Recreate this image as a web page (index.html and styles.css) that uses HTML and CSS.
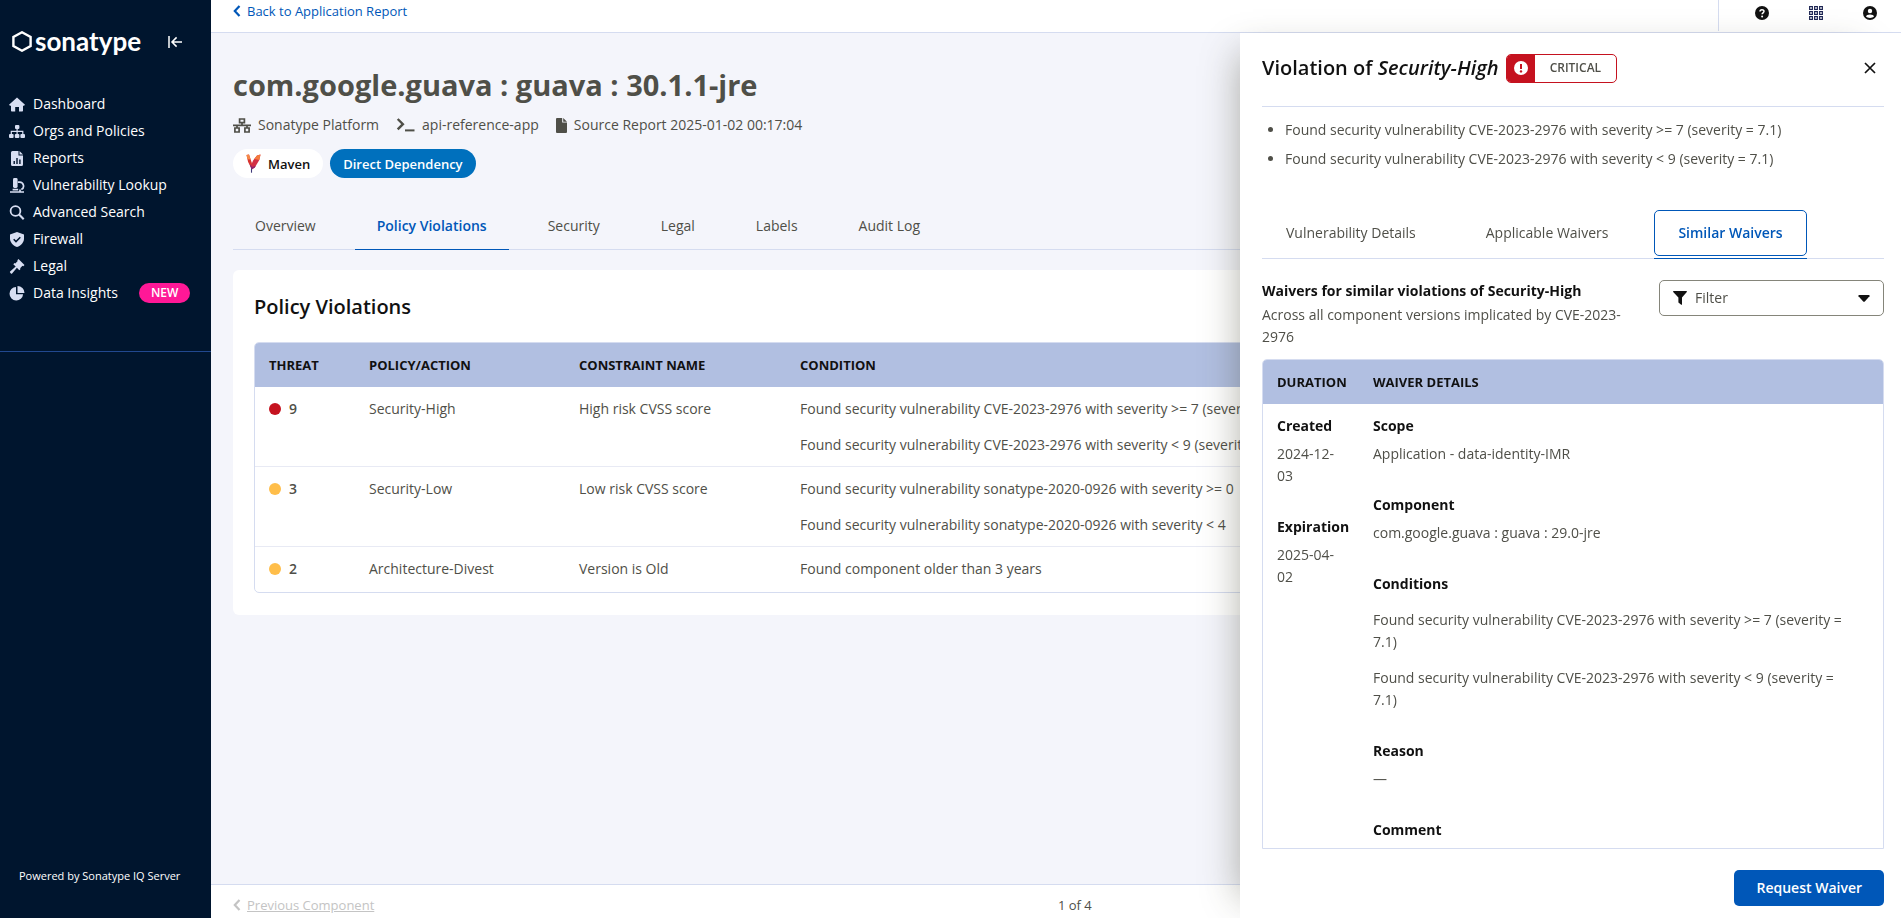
FILE: index.html
```html
<!DOCTYPE html>
<html lang="en">
<head>
<meta charset="utf-8">
<title>Component Details</title>
<link rel="stylesheet" href="styles.css">
</head>
<body>
<svg class="sprite" aria-hidden="true">
  <symbol id="i-chevron" viewBox="0 0 8 12"><path d="M6.5 1 1.8 6l4.7 5" fill="none" stroke="currentColor" stroke-width="2.2"/></symbol>
  <symbol id="i-home" viewBox="0 0 16 14"><path d="M8 0 16 7.2 15 8.2H14V13.2Q14 14 13.2 14H10V9.6H6.2V14H2.8Q2 14 2 13.2V8.2H1L0 7.2Z" fill="currentColor"/></symbol>
  <symbol id="i-orgs" viewBox="0 0 16 13"><g fill="currentColor"><rect x="6" y="0" width="4.4" height="4" rx="1"/><rect x="0" y="9" width="4.6" height="4" rx="1"/><rect x="5.8" y="9" width="4.6" height="4" rx="1"/><rect x="11.4" y="9" width="4.6" height="4" rx="1"/></g><path d="M8.1 4v5M2.3 9V6.3h11.5V9" fill="none" stroke="currentColor" stroke-width="1.2"/></symbol>
  <symbol id="i-report" viewBox="0 0 12 15"><path d="M1.5 0H7.5V4.5H12V13.5Q12 15 10.5 15H1.5Q0 15 0 13.5V1.5Q0 0 1.5 0ZM8.5 0 12 3.6H8.5Z" fill="currentColor"/><path d="M3.2 13v-3M6 13V7M8.9 13V8.4" stroke="#00152e" stroke-width="1.4"/></symbol>
  <symbol id="i-micro" viewBox="0 0 16 15"><rect x="4" y="0" width="4.6" height="10" rx="1.4" fill="currentColor"/><path d="M8.8 4.2h1.5a3.9 3.9 0 0 1 2 7.4M1 14h14M3.6 11.6h5.6M11 13.4v-1.8" fill="none" stroke="currentColor" stroke-width="1.7"/></symbol>
  <symbol id="i-search" viewBox="0 0 15 15"><circle cx="6" cy="6" r="4.9" fill="none" stroke="currentColor" stroke-width="1.8"/><path d="m9.6 9.6 4.6 4.6" stroke="currentColor" stroke-width="2.1"/></symbol>
  <symbol id="i-shield" viewBox="0 0 14 15"><path d="M7 0 14 2.4V6.5C14 10.5 11 13.6 7 15 3 13.6 0 10.5 0 6.5V2.4Z" fill="currentColor"/><path d="m3.7 7.2 2.3 2.4 4.3-4.3" fill="none" stroke="#00152e" stroke-width="1.5"/></symbol>
  <symbol id="i-gavel" viewBox="0 0 15 15"><path d="M7.8 1.2 9 0 15 6 13.8 7.2 13 6.8 10.6 9.2 11 10 9.8 11.2 7.4 8.8 2.6 14.4Q2 15 1.4 14.4L.6 13.6Q0 13 .6 12.4L6.2 7.6 3.8 5.2 5 4 5.8 4.4 8.2 2Z" fill="currentColor"/></symbol>
  <symbol id="i-pie" viewBox="0 0 15 15"><path d="M6.5 1V8.3H13.6A6.8 6.8 0 1 1 6.5 1ZM8 0A7 7 0 0 1 15 7H8Z" fill="currentColor"/></symbol>
  <symbol id="i-sitemap" viewBox="0 0 18 15"><path d="M6.6 1h4.8v3.6H6.6ZM1.9 10h4.2v4H1.9ZM11.9 10h4.2v4h-4.2ZM9 4.6v2.7M4 10V7.3M14 10V7.3M0 7.3h18" fill="none" stroke="currentColor" stroke-width="1.7"/></symbol>
  <symbol id="i-terminal" viewBox="0 0 18 14"><path d="m1.2 1 5.2 5.2L1.2 11.4" fill="none" stroke="currentColor" stroke-width="2.4"/><path d="M8.5 12.4H18" stroke="currentColor" stroke-width="2"/></symbol>
  <symbol id="i-file" viewBox="0 0 11 15"><path d="M1 0H6.2V4.6H11V14Q11 15 10 15H1Q0 15 0 14V1Q0 0 1 0ZM7.2 0 11 3.7H7.2Z" fill="currentColor"/></symbol>
  <symbol id="i-maven" viewBox="0 0 14 19"><path d="M0 1 2.5.5 5.2 8.5 6 13 4 12.5 1.6 8Z" fill="#d8342f"/><path d="M0 1 2.5.5 4 5.5 1 5.2Z" fill="#f58a45"/><path d="M14 .5 12.8 6 8.3 13.5 5.4 15.5 4 12.5 6.6 6.5 10.5 1.6Z" fill="#d22f45"/><path d="M14 .5 12.8 6 7.7 5 10.5 1.6Z" fill="#f47b3c"/><path d="m3 10 3 3 3.3-1.2-1 1.7-3.3 2Z" fill="#8b2370"/><path d="M5 14.5v4.2" stroke="#3f3a7a" stroke-width="1.1"/></symbol>
  <symbol id="i-help" viewBox="0 0 14 14"><circle cx="7" cy="7" r="7" fill="currentColor"/><path d="M5 5.6C5 3.1 9 3.2 9 5.3 9 6.8 7.1 6.8 7.1 8.3" fill="none" stroke="#fff" stroke-width="1.5"/><circle cx="7.1" cy="10.4" r="1" fill="#fff"/></symbol>
  <symbol id="i-grid" viewBox="0 0 14 14"><path d="M.6.6h2.8v2.8H.6ZM5.6.6h2.8v2.8H5.6ZM10.6.6h2.8v2.8h-2.8ZM.6 5.6h2.8v2.8H.6ZM5.6 5.6h2.8v2.8H5.6ZM10.6 5.6h2.8v2.8h-2.8ZM.6 10.6h2.8v2.8H.6ZM5.6 10.6h2.8v2.8H5.6ZM10.6 10.6h2.8v2.8h-2.8Z" fill="none" stroke="currentColor" stroke-width="1.1"/></symbol>
  <symbol id="i-user" viewBox="0 0 14 14"><circle cx="7" cy="7" r="7" fill="currentColor"/><circle cx="7" cy="5" r="2.2" fill="#fff"/><path d="M3 10.6C3 7.8 11 7.8 11 10.6 9.6 12.4 4.4 12.4 3 10.6Z" fill="#fff"/></symbol>
  <symbol id="i-close" viewBox="0 0 12 12"><path d="m1 1 10 10M11 1 1 11" stroke="currentColor" stroke-width="1.7"/></symbol>
  <symbol id="i-alert" viewBox="0 0 14 14"><circle cx="7" cy="7" r="7" fill="#fff"/><path d="M7 3v5" stroke="#c5121f" stroke-width="2"/><circle cx="7" cy="10.4" r="1.2" fill="#c5121f"/></symbol>
  <symbol id="i-filter" viewBox="0 0 14 14"><path d="M.4 0H13.6Q14.2.6 13.6 1.2L9 6.6V13.4Q8.8 14 8.2 13.7L5.4 11.6V6.6L.4 1.2Q-.2.6.4 0Z" fill="currentColor"/></symbol>
  <symbol id="i-caret" viewBox="0 0 12 7"><path d="M1 0H11Q12 .4 11.5 1.2L6.8 6.4Q6 7 5.2 6.4L.5 1.2Q0 .4 1 0Z" fill="currentColor"/></symbol>
  <symbol id="i-collapse" viewBox="0 0 14 12"><path d="M1 0v12M14 6H4M8.6 1.4 4 6l4.6 4.6" fill="none" stroke="currentColor" stroke-width="1.5"/></symbol>
  <symbol id="i-hex" viewBox="0 0 20 21"><path d="M10 1.3 18.6 6v9L10 19.7 1.4 15V6Z" fill="none" stroke="currentColor" stroke-width="2.4"/></symbol>
</svg>

<div class="app">
  <aside class="sidebar">
    <div class="brand">
      <a class="logo" href="#"><svg class="logo-mark"><use href="#i-hex"/></svg><span>sonatype</span></a>
      <button class="icon-btn collapse" aria-label="Collapse sidebar"><svg><use href="#i-collapse"/></svg></button>
    </div>
    <nav class="nav">
      <a href="#"><svg><use href="#i-home"/></svg>Dashboard</a>
      <a href="#"><svg><use href="#i-orgs"/></svg>Orgs and Policies</a>
      <a href="#"><svg><use href="#i-report"/></svg>Reports</a>
      <a href="#"><svg><use href="#i-micro"/></svg>Vulnerability Lookup</a>
      <a href="#"><svg><use href="#i-search"/></svg>Advanced Search</a>
      <a href="#"><svg><use href="#i-shield"/></svg>Firewall</a>
      <a href="#"><svg><use href="#i-gavel"/></svg>Legal</a>
      <a href="#"><svg><use href="#i-pie"/></svg>Data Insights<span class="new">NEW</span></a>
    </nav>
    <p class="powered">Powered by Sonatype IQ Server</p>
  </aside>

  <div class="page">
    <header class="topbar">
      <a class="back" href="#"><svg class="chev"><use href="#i-chevron"/></svg>Back to Application Report</a>
      <div class="tools">
        <button class="icon-btn" aria-label="Help"><svg><use href="#i-help"/></svg></button>
        <button class="icon-btn apps" aria-label="Apps"><svg><use href="#i-grid"/></svg></button>
        <button class="icon-btn" aria-label="Account"><svg><use href="#i-user"/></svg></button>
      </div>
    </header>

    <main class="content">
      <h1>com.google.guava : guava : 30.1.1-jre</h1>
      <div class="meta">
        <span><svg class="m-site"><use href="#i-sitemap"/></svg>Sonatype Platform</span>
        <span><svg class="m-term"><use href="#i-terminal"/></svg>api-reference-app</span>
        <span><svg class="m-file"><use href="#i-file"/></svg>Source Report 2025-01-02 00:17:04</span>
      </div>
      <div class="tags">
        <span class="tag"><svg><use href="#i-maven"/></svg>Maven</span>
        <span class="tag direct">Direct Dependency</span>
      </div>
      <div class="tabs" role="tablist">
        <button role="tab">Overview</button>
        <button role="tab" class="on" aria-selected="true">Policy Violations</button>
        <button role="tab">Security</button>
        <button role="tab">Legal</button>
        <button role="tab">Labels</button>
        <button role="tab">Audit Log</button>
      </div>
      <section class="tile">
        <h2>Policy Violations</h2>
        <div class="frame">
          <table class="violations">
            <colgroup><col class="c1"><col class="c2"><col class="c3"><col></colgroup>
            <thead><tr><th>THREAT</th><th>POLICY/ACTION</th><th>CONSTRAINT NAME</th><th>CONDITION</th></tr></thead>
            <tbody>
              <tr><td><span class="threat"><i class="dot red"></i>9</span></td><td>Security-High</td><td>High risk CVSS score</td><td><p>Found security vulnerability CVE-2023-2976 with severity &gt;= 7 (severity = 7.1)</p><p>Found security vulnerability CVE-2023-2976 with severity &lt; 9 (severity = 7.1)</p></td></tr>
              <tr><td><span class="threat"><i class="dot"></i>3</span></td><td>Security-Low</td><td>Low risk CVSS score</td><td><p>Found security vulnerability sonatype-2020-0926 with severity &gt;= 0</p><p>Found security vulnerability sonatype-2020-0926 with severity &lt; 4</p></td></tr>
              <tr><td><span class="threat"><i class="dot"></i>2</span></td><td>Architecture-Divest</td><td>Version is Old</td><td><p>Found component older than 3 years</p></td></tr>
            </tbody>
          </table>
        </div>
      </section>
    </main>

    <footer class="pager">
      <a class="prev" aria-disabled="true"><svg class="chev"><use href="#i-chevron"/></svg><span>Previous Component</span></a>
      <span>1 of 4</span>
      <a class="next" href="#">Next Component</a>
    </footer>
  </div>

  <aside class="drawer">
    <header class="drawer-head">
      <h2>Violation of <em>Security-High</em></h2>
      <span class="critical"><span class="crit-icon"><svg><use href="#i-alert"/></svg></span><span class="crit-text">CRITICAL</span></span>
      <button class="icon-btn close" aria-label="Close"><svg><use href="#i-close"/></svg></button>
    </header>
    <ul class="reasons">
      <li>Found security vulnerability CVE-2023-2976 with severity &gt;= 7 (severity = 7.1)</li>
      <li>Found security vulnerability CVE-2023-2976 with severity &lt; 9 (severity = 7.1)</li>
    </ul>
    <div class="dtabs" role="tablist">
      <button role="tab"><span>Vulnerability Details</span></button>
      <button role="tab"><span>Applicable Waivers</span></button>
      <button role="tab" class="on" aria-selected="true"><span>Similar Waivers</span></button>
    </div>
    <div class="intro">
      <div>
        <h3>Waivers for similar violations of Security-High</h3>
        <p>Across all component versions implicated by CVE-2023-2976</p>
      </div>
      <button class="filter"><svg class="f-icon"><use href="#i-filter"/></svg>Filter<svg class="f-caret"><use href="#i-caret"/></svg></button>
    </div>
    <div class="waivers">
      <table>
        <colgroup><col class="w1"><col></colgroup>
        <thead><tr><th>DURATION</th><th>WAIVER DETAILS</th></tr></thead>
        <tbody><tr>
          <td><dl><dt>Created</dt><dd>2024-12-03</dd><dt>Expiration</dt><dd>2025-04-02</dd></dl></td>
          <td class="details"><dl>
            <dt>Scope</dt><dd>Application - data-identity-IMR</dd>
            <dt>Component</dt><dd>com.google.guava : guava : 29.0-jre</dd>
            <dt>Conditions</dt><dd class="conds"><p>Found security vulnerability CVE-2023-2976 with severity &gt;= 7 (severity = 7.1)</p><p>Found security vulnerability CVE-2023-2976 with severity &lt; 9 (severity = 7.1)</p></dd>
            <dt>Reason</dt><dd>—</dd>
            <dt>Comment</dt>
          </dl></td>
        </tr></tbody>
      </table>
    </div>
    <footer class="drawer-foot"><button class="primary">Request Waiver</button></footer>
  </aside>
</div>
</body>
</html>
```
FILE: styles.css
```css
* { box-sizing: border-box; }
body { margin: 0; font: 14px/22px "Open Sans", sans-serif; color: #4f4f48; background: #f4f5fb; }
h1, h2, h3, p, ul, dl, dd { margin: 0; padding: 0; }
button { font: inherit; color: inherit; background: none; border: 0; padding: 0; cursor: pointer; }
a { text-decoration: none; color: inherit; }
.sprite { display: none; }
svg { flex: none; }
.app { display: grid; grid-template-columns: 211px 1fr; height: 100vh; overflow: hidden; }
.icon-btn { display: flex; }

.sidebar { background: #00152e; color: #fff; display: flex; flex-direction: column; }
.brand { display: flex; justify-content: space-between; align-items: center; height: 84px; padding: 0 29px 0 12px; }
.logo { display: flex; align-items: center; gap: 3px; padding-bottom: 2px; font: 700 26px/32px Lato, sans-serif; }
.logo-mark { width: 20px; height: 21px; }
.collapse svg { width: 14px; height: 12px; }
.nav { display: flex; flex-direction: column; gap: 5px; padding: 9px 0 47px 9px; border-bottom: 1px solid #21488f; }
.nav a { display: flex; align-items: center; gap: 8px; line-height: 22px; }
.nav svg { width: 16px; height: 15px; color: #d7def2; }
.new { margin-left: 13px; padding: 0 12px; border-radius: 10px; background: #ff1897; font-size: 12px; font-weight: 600; line-height: 20px; }
.powered { margin-top: auto; padding: 0 19px 31px; font-size: 11px; line-height: 22px; }

.page { display: flex; flex-direction: column; min-width: 0; min-height: 0; }
.topbar { display: flex; justify-content: space-between; height: 33px; background: #fff; border-bottom: 1px solid #d5dcf0; }
.back { display: flex; align-items: center; gap: 6px; height: 22px; padding-left: 22px; color: #0057b8; font-size: 13px; }
.chev { width: 8px; height: 12px; }
.tools { display: flex; align-items: center; gap: 40px; height: 31px; padding: 0 24px 6px 36px; border-left: 1px solid #d5dcf0; color: #111; }
.tools svg { width: 14px; height: 14px; }
.apps { color: #1c2452; }
.content { flex: 1; padding: 32px 22px; }
h1 { font-size: 29px; line-height: 40px; }
.meta { display: flex; gap: 17px; margin-top: 9px; }
.meta span { display: flex; align-items: center; gap: 7px; }
.m-site { width: 18px; height: 15px; }
.m-term { width: 19px; height: 14px; }
.m-file { width: 11px; height: 15px; }
.tags { display: flex; gap: 7px; margin-top: 13px; }
.tag { display: flex; align-items: center; gap: 7px; height: 29px; padding: 0 13px; border-radius: 15px; background: #fff; color: #111; font-size: 13px; font-weight: 600; }
.tag svg { width: 15px; height: 19px; }
.direct { background: #0070bd; color: #fff; }
.tabs { display: flex; gap: 17px; margin-top: 25px; border-bottom: 1px solid #d5dcf0; }
.tabs button { padding: 12px 22px; margin-bottom: -1px; border-bottom: 1px solid transparent; }
.tabs .on, .dtabs .on { color: #0057b8; font-weight: 600; border-color: #0057b8; }
.tile { margin-top: 20px; padding: 22px 21px; border-radius: 6px; background: #fff; }
.tile h2, .drawer-head h2 { color: #111; font-size: 20px; line-height: 30px; font-weight: 600; }
.frame, .waivers { border: 1px solid #d5dcf0; border-radius: 5px; overflow: hidden; }
.frame { margin-top: 20px; }
table { width: 100%; border-collapse: collapse; table-layout: fixed; text-align: left; }
th { height: 44px; padding: 0 14px; background: #b1bfe1; color: #111; font-size: 13px; font-weight: 700; white-space: nowrap; }
td { padding: 11px 14px 10px; vertical-align: top; }
.violations tbody tr + tr { border-top: 1px solid #e8eaf4; }
.violations tbody tr:last-child td { padding-bottom: 12px; }
.violations td p { white-space: nowrap; }
.violations td p + p { margin-top: 14px; }
.c1 { width: 100px; } .c2 { width: 210px; } .c3 { width: 221px; }
.threat { display: flex; align-items: center; gap: 8px; font-weight: 600; }
.dot { width: 12px; height: 12px; border-radius: 50%; background: #ffbe4a; }
.dot.red { background: #c5121f; }
.pager { display: flex; justify-content: space-between; align-items: center; height: 34px; padding: 7px 22px 0; background: #fff; border-top: 1px solid #d5dcf0; font-size: 13px; }
.prev { display: flex; align-items: center; gap: 6px; color: #c4c4c4; }
.prev span { text-decoration: underline; }
.next { color: #0057b8; }

.drawer { position: fixed; top: 33px; right: 0; bottom: 0; width: 661px; display: flex; flex-direction: column; padding: 0 17px 0 22px; background: #fff; box-shadow: -20px 0 36px -20px rgba(60, 60, 40, .4); }
.drawer-head { display: flex; align-items: center; height: 74px; padding-bottom: 3px; border-bottom: 1px solid #d5dcf0; }
.critical { display: flex; margin-left: 7px; height: 29px; border: 1px solid #c5121f; border-radius: 5px; overflow: hidden; }
.crit-icon { display: flex; align-items: center; justify-content: center; width: 28px; background: #c5121f; }
.crit-icon svg { width: 14px; height: 14px; }
.crit-text { padding: 0 15px; font-size: 12px; line-height: 26px; font-weight: 600; }
.close { margin-left: auto; padding-right: 8px; color: #111; }
.close svg { width: 12px; height: 12px; }
.reasons { padding: 12px 0 0 23px; }
.reasons li { margin-bottom: 7px; }
.dtabs { display: flex; gap: 22px; margin-top: 33px; border-bottom: 1px solid #d5dcf0; }
.dtabs button { height: 49px; margin-bottom: -1px; padding-bottom: 2px; border-bottom: 1px solid transparent; }
.dtabs span { display: block; padding: 11px 23px; border: 1px solid transparent; border-radius: 5px; }
.dtabs .on span { border-color: #0057b8; }
.intro { display: grid; grid-template-columns: 1fr 225px; gap: 20px; padding-top: 21px; align-items: start; }
.intro h3, dt { color: #111; font-size: 14px; line-height: 22px; font-weight: 700; }
.intro p { margin-top: 2px; }
.filter { display: flex; align-items: center; gap: 8px; height: 36px; padding: 0 13px; border: 1px solid #85857a; border-radius: 5px; }
.filter svg { color: #111; }
.f-icon { width: 14px; height: 14px; }
.f-caret { width: 12px; height: 7px; margin-left: auto; }
.waivers { flex: 1; min-height: 0; margin-top: 11px; border-radius: 5px 5px 0 0; }
.w1 { width: 96px; }
.details { padding-right: 24px; }
.waivers dd { margin: 6px 0 29px; }
.waivers .conds { margin-top: 14px; }
.conds p + p { margin-top: 14px; }
.drawer-foot { display: flex; justify-content: flex-end; padding: 21px 0 12px; }
.primary { height: 36px; padding: 0 22px; border-radius: 5px; background: #0057b8; color: #fff; font-weight: 600; }
```
